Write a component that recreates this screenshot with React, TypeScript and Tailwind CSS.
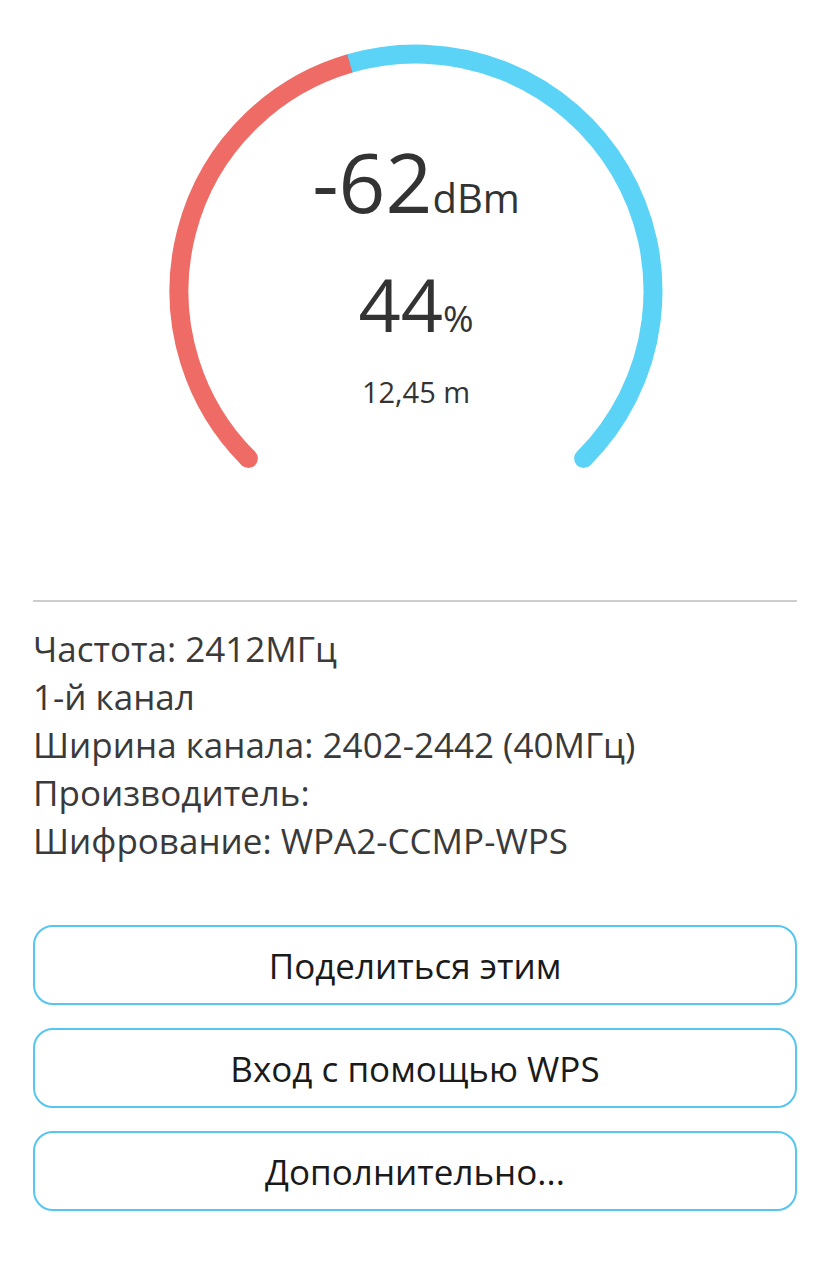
import React from 'react';

// Gauge geometry (page coordinates)
const CX = 416;
const CY = 291;
const R = 237;
const PERCENT = 44;

function pt(deg: number) {
  const a = (deg * Math.PI) / 180;
  return { x: CX + R * Math.sin(a), y: CY - R * Math.cos(a) };
}

function Gauge() {
  const start = pt(-135);
  const end = pt(135);
  const split = -135 + (PERCENT / 100) * 270;
  const mid = pt(split);
  return (
    <div className="relative h-[600px] w-full">
      <svg width="838" height="600" viewBox="0 0 838 600" className="block">
        <path
          d={`M ${mid.x} ${mid.y} A ${R} ${R} 0 0 1 ${end.x} ${end.y}`}
          fill="none"
          stroke="#5BD3F7"
          strokeWidth={19}
          strokeLinecap="round"
        />
        <path
          d={`M ${start.x} ${start.y} A ${R} ${R} 0 0 1 ${mid.x} ${mid.y}`}
          fill="none"
          stroke="#EF6C66"
          strokeWidth={19}
          strokeLinecap="butt"
        />
        <circle cx={start.x} cy={start.y} r={9.5} fill="#EF6C66" />
      </svg>
      <div className="absolute inset-x-0 top-[140px] flex flex-col items-center pr-[6px] text-[#333] font-['Open_Sans',sans-serif]">
        <div className="flex items-baseline">
          <span className="text-[82px] leading-[82px]">-62</span>
          <span className="text-[40px] leading-[40px]">dBm</span>
        </div>
        <div className="mt-[45px] flex items-baseline">
          <span className="text-[74px] leading-[74px]">44</span>
          <span className="text-[37px] leading-[37px]">%</span>
        </div>
        <div className="mt-[36px] text-[29px] leading-[29px]">12,45 m</div>
      </div>
    </div>
  );
}

const INFO = [
  'Частота: 2412МГц',
  '1-й канал',
  'Ширина канала: 2402-2442 (40МГц)',
  'Производитель:',
  'Шифрование: WPA2-CCMP-WPS',
];

const ACTIONS = ['Поделиться этим', 'Вход с помощью WPS', 'Дополнительно...'];

export default function App() {
  return (
    <div className="min-h-[1280px] w-[838px] bg-white font-['Open_Sans',sans-serif]">
      <Gauge />
      <div className="pl-[33px] pr-[41px]">
        <div className="border-t-2 border-[#cdcdcd]" />
        <div className="mt-[23px] text-[35px] leading-[48px] text-[#3a3a3a]">
          {INFO.map((line) => (
            <div key={line}>{line}</div>
          ))}
        </div>
        <div className="mt-[60px] flex flex-col gap-[23px]">
          {ACTIONS.map((label) => (
            <button
              key={label}
              className="flex h-[80px] items-center justify-center rounded-[20px] border-2 border-[#55c6f1] bg-white text-[#1a1a1a]"
            >
              <span className="text-[35px] leading-none">{label}</span>
            </button>
          ))}
        </div>
      </div>
    </div>
  );
}
